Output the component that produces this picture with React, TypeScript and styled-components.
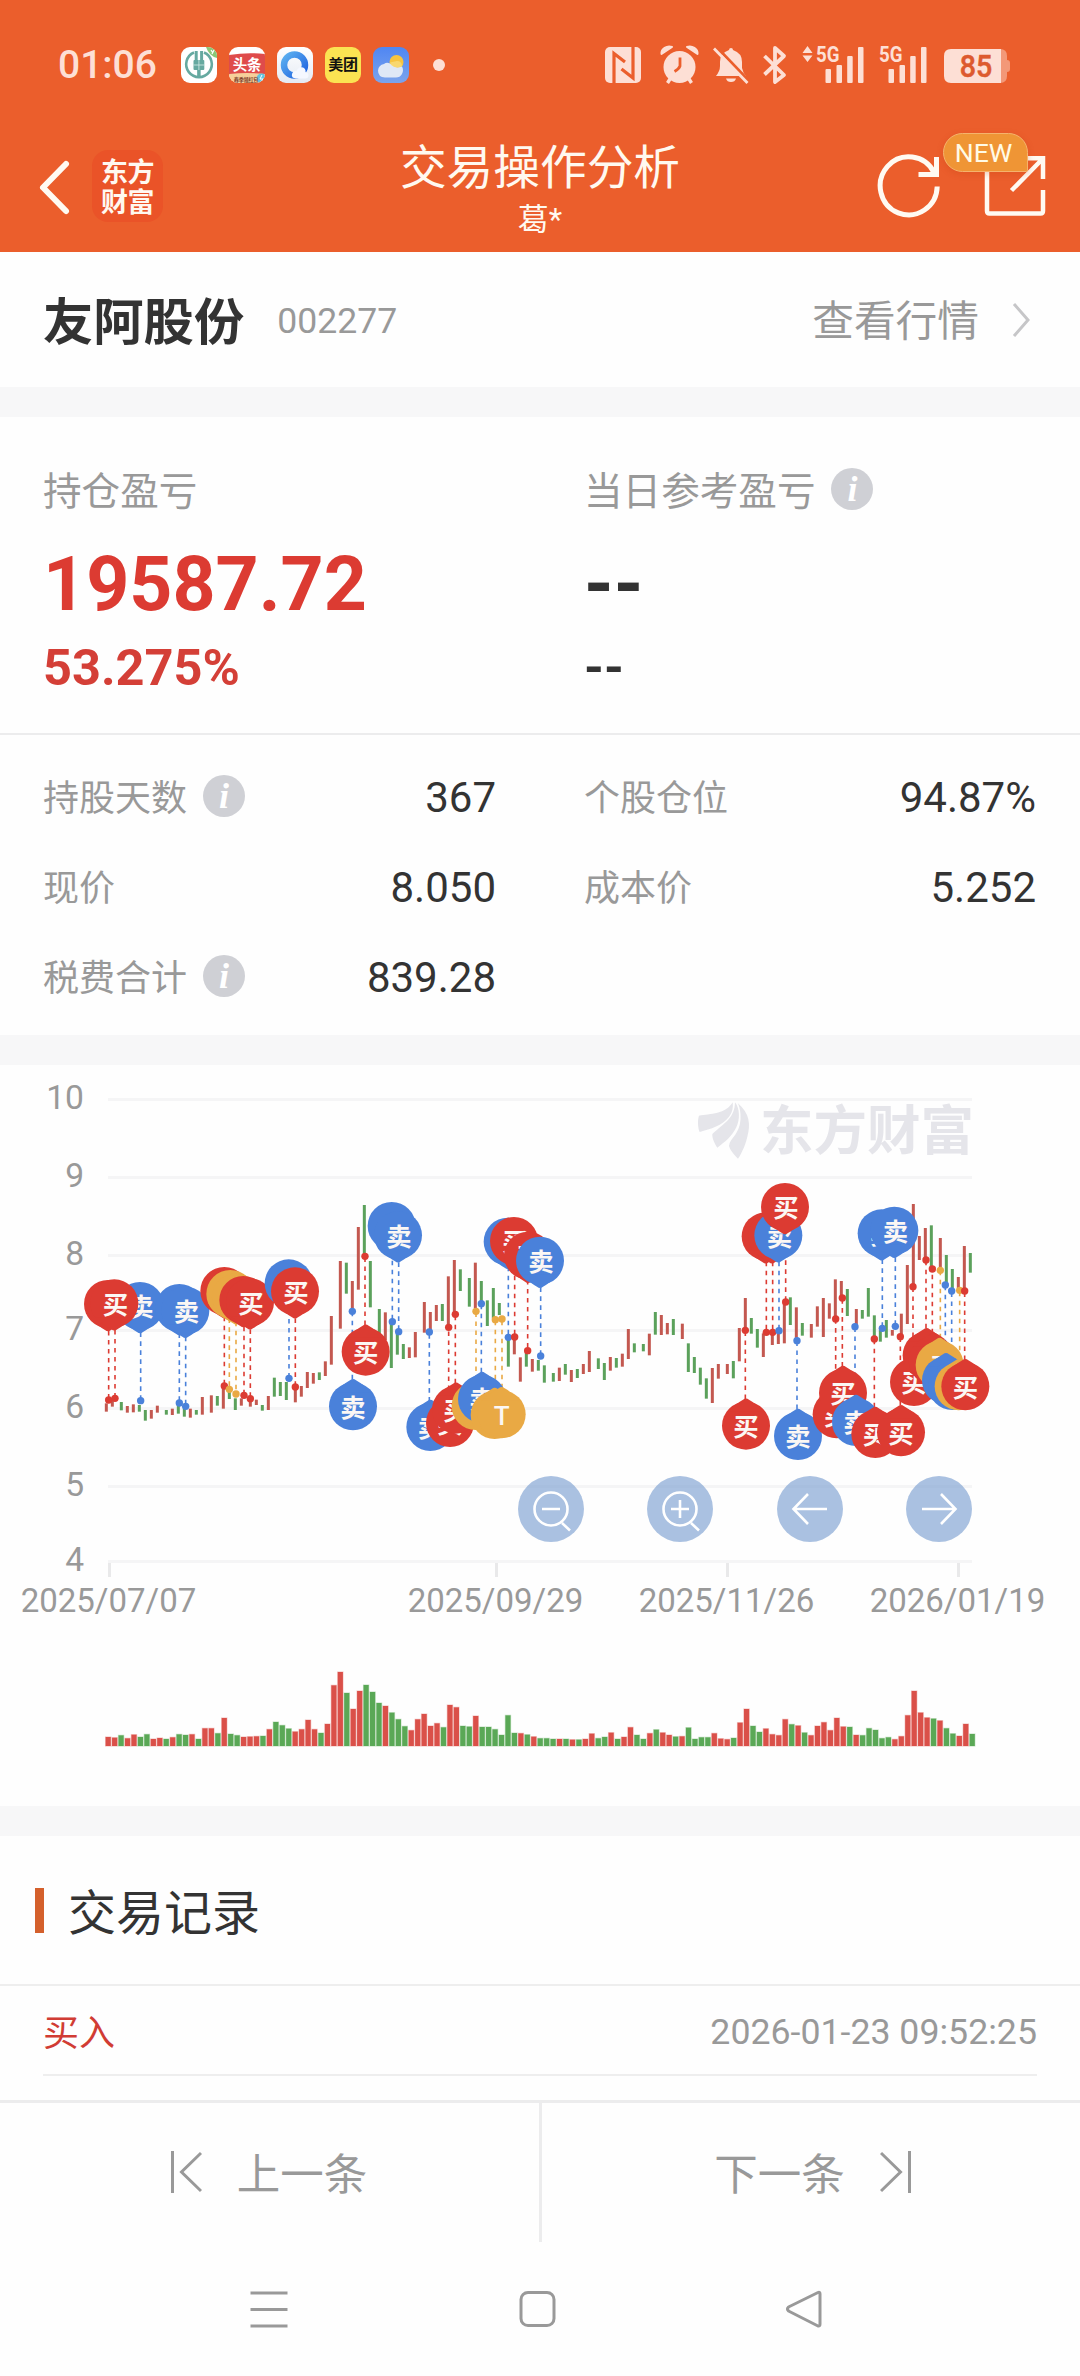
import React from "react";
import styled, { createGlobalStyle } from "styled-components";

const SANS = `Roboto, "Noto Sans CJK SC", sans-serif`;
const RED = "#dc3b32";
const BLUE = "#4a81da";
const AMBER = "#e9a944";
const UP = "#c35850";
const DOWN = "#5ba15b";

const Global = createGlobalStyle`
  body { margin: 0; background: #fdfdfd; }
  * { box-sizing: border-box; }
`;

const Screen = styled.div`
  width: 1080px;
  height: 2376px;
  overflow: hidden;
  display: flex;
  flex-direction: column;
  background: #fefefe;
  font-family: ${SANS};
  color: #333;
`;

const Header = styled.header`
  height: 252px;
  flex: none;
  background: #eb5e2c;
  display: flex;
  flex-direction: column;
`;

const StatusBar = styled.div`
  height: 130px;
  padding: 0 70px 0 58px;
  display: flex;
  justify-content: space-between;
  align-items: center;
  color: #fddfd5;
`;

const Clock = styled.span`
  width: 123px;
  font-size: 39px;
  font-weight: 500;
  line-height: 46px;
`;

const StatusGroup = styled.div`
  display: flex;
  align-items: center;
`;

const AppTile = styled.span<{ $bg: string }>`
  width: 36px;
  height: 36px;
  margin-right: 12px;
  border-radius: 9px;
  overflow: hidden;
  background: ${(p) => p.$bg};
  display: flex;
  align-items: center;
  justify-content: center;
  font-size: 15px;
  line-height: 36px;
  font-weight: 700;
  letter-spacing: -0.3px;
  color: #111;
`;

const Dot = styled.span`
  width: 12px;
  height: 12px;
  margin-left: 12px;
  border-radius: 50%;
  background: #fddfd5;
`;

const NavBar = styled.div`
  flex: 1;
  display: grid;
  grid-template-columns: 300px 1fr 300px;
`;

const NavLeft = styled.div`
  display: flex;
  align-items: flex-start;
  padding: 20px 0 0 36px;
  gap: 18px;
`;

const BrandTile = styled.div`
  width: 71px;
  height: 72px;
  border-radius: 16px;
  background: #ea5328;
  padding: 8px 0 0 0;
  text-align: center;
  font-size: 27px;
  line-height: 30px;
  font-weight: 700;
  letter-spacing: -0.5px;
  color: #fff8f0;
`;

const TitleBlock = styled.div`
  padding-top: 10px;
  text-align: center;
  color: #fff9f0;
  white-space: nowrap;
`;

const Title = styled.h1`
  margin: 0;
  font-size: 46.7px;
  font-weight: 400;
  line-height: 56px;
`;

const Subtitle = styled.div`
  font-size: 31px;
  line-height: 47px;
`;

const NavRight = styled.div`
  display: flex;
  align-items: flex-start;
  padding: 22px 0 0 96px;
  gap: 41px;
`;

const ShareWrap = styled.div`
  position: relative;
  width: 66px;
`;

const NewBadge = styled.span`
  position: absolute;
  left: -40px;
  top: -19px;
  width: 85px;
  height: 39px;
  border: 1.5px solid #f5b36c;
  border-radius: 20px 20px 2px 20px;
  background: #ef9535;
  box-shadow: 0 2px 6px rgba(190, 60, 10, 0.25);
  color: #fffbe6;
  font-size: 26.5px;
  line-height: 37px;
  text-align: center;
  padding-right: 4px;
`;

const StockRow = styled.section`
  height: 135px;
  flex: none;
  padding: 0 43px;
  display: flex;
  align-items: center;
`;

const StockName = styled.span`
  padding-top: 6px;
  font-size: 50.3px;
  font-weight: 700;
  line-height: 60px;
`;

const StockCode = styled.span`
  margin-left: 33px;
  padding-top: 3px;
  font-size: 35.6px;
  line-height: 40px;
  color: #999;
`;

const QuoteLink = styled.a`
  margin-left: auto;
  display: flex;
  align-items: center;
  gap: 32px;
  padding-right: 6px;
  line-height: 50px;
`;

const QuoteText = styled.span`
  padding-top: 4px;
  font-size: 41.7px;
  color: #999;
`;

const Band = styled.div`
  height: 30px;
  flex: none;
  background: #f7f7f8;
`;

const ProfitGrid = styled.section`
  height: 318px;
  flex: none;
  padding: 43px 43px 0;
  display: grid;
  grid-template-columns: 541px 1fr;
  border-bottom: 2px solid #ececed;
`;

const ProfitColumn = styled.div`
  display: flex;
  flex-direction: column;
`;

const Label = styled.span<{ $size?: number }>`
  display: inline-flex;
  align-items: center;
  gap: 16px;
  height: 60px;
  padding-top: 4px;
  font-size: ${(p) => p.$size ?? 36}px;
  line-height: 56px;
  color: #999;
`;

const BigValue = styled.strong<{ $tone: string }>`
  margin-top: 19px;
  font-size: 75.2px;
  line-height: 90px;
  font-weight: 700;
  color: ${(p) => p.$tone};
`;

const SubValue = styled.strong<{ $tone: string }>`
  margin-top: 8px;
  font-size: 50.5px;
  line-height: 62px;
  font-weight: 700;
  color: ${(p) => p.$tone};
`;

const InfoDot = styled.span`
  width: 42px;
  height: 42px;
  margin-bottom: 6px;
  border-radius: 50%;
  background: #cfd0d5;
  color: #fff;
  display: inline-flex;
  align-items: center;
  justify-content: center;
  font: italic 700 36px/42px "Liberation Serif", serif;
`;

const StatGrid = styled.section`
  height: 300px;
  flex: none;
  padding: 17px 44px 0 43px;
  display: grid;
  grid-template-columns: 453px 452px;
  grid-auto-rows: 90px;
  column-gap: 88px;
`;

const StatRow = styled.div`
  display: flex;
  align-items: center;
  justify-content: space-between;
`;

const StatValue = styled.span`
  padding-top: 1px;
  font-size: 42px;
  line-height: 60px;
  color: #333;
`;

const ChartPanel = styled.section`
  position: relative;
  height: 741px;
  flex: none;
`;

const ChartControls = styled.div`
  position: absolute;
  left: 518px;
  top: 411px;
  width: 454px;
  display: flex;
  justify-content: space-between;
`;

const RoundButton = styled.button`
  width: 66px;
  height: 66px;
  padding: 0;
  border: 0;
  border-radius: 50%;
  background: rgba(130, 163, 211, 0.68);
  display: block;
`;

const RecordHead = styled.div`
  height: 150px;
  flex: none;
  display: flex;
  align-items: center;
  gap: 24px;
  padding: 2px 0 0 35px;
  border-bottom: 2px solid #eee;
`;

const RecordTitle = styled.h2`
  margin: 0;
  padding-top: 5px;
  font-size: 48px;
  font-weight: 400;
  line-height: 60px;
`;

const Accent = styled.i`
  width: 9px;
  height: 45px;
  background: #d4602c;
  margin-top: -2px;
`;

const RecordRow = styled.div`
  height: 90px;
  flex: none;
  margin: 0 43px;
  display: flex;
  align-items: center;
  justify-content: space-between;
  border-bottom: 2px solid #eee;
`;

const Side = styled.span`
  font-size: 36px;
  color: #d13c34;
`;

const Time = styled.span`
  padding-top: 4px;
  font-size: 35.7px;
  color: #999;
`;

const Pager = styled.nav`
  margin-top: 24px;
  height: 142px;
  flex: none;
  display: grid;
  grid-template-columns: 542px 538px;
  border-top: 3px solid #ececed;
`;

const PagerItem = styled.div<{ $first?: boolean }>`
  display: flex;
  align-items: center;
  justify-content: center;
  gap: 35px;
  padding: 0 ${(p) => (p.$first ? 2 : 0)}px 2px ${(p) => (p.$first ? 0 : 4)}px;
  border-right: ${(p) => (p.$first ? "3px solid #ececed" : "0")};
`;

const PagerText = styled.span`
  padding-top: 8px;
  font-size: 43.5px;
  line-height: 60px;
  color: #999;
`;

const SystemNav = styled.div`
  flex: 1;
  display: flex;
  justify-content: space-between;
  align-items: center;
  padding: 0 256px 0 249px;
`;

/* ---------- chart data ---------- */

type Kind = "R" | "B" | "O";
// x, top, bottom in thirds of a pixel from the block origin, then direction.
type Candle = [number, number, number, "R" | "G"];
// x, dot y, far end y, kind.
type Trace = [number, number, number, Kind];
// x, centre y, pointing direction, kind, and true when a later pin covers the glyph.
type Pin = [number, number, "up" | "down", Kind, boolean?];

interface Block {
  origin: number;
  candles: Candle[];
  traces: Trace[];
  pins: Pin[];
}

const blocks: Block[] = [
  {
    origin: 60,
    candles: [
      [139, 1000, 1025, "R"], [157, 990, 1010, "R"], [184, 996, 1021, "G"], [202, 1008, 1028, "R"],
      [220, 1003, 1027, "R"], [238, 1005, 1025, "G"], [256, 1020, 1052, "G"], [274, 1020, 1046, "R"],
      [292, 1007, 1028, "R"], [319, 1020, 1034, "G"], [337, 1016, 1035, "R"], [355, 1005, 1031, "G"],
      [373, 1015, 1040, "G"], [391, 1016, 1043, "R"], [409, 1020, 1034, "G"], [427, 981, 1034, "R"],
      [454, 976, 1028, "R"], [472, 978, 1007, "G"], [490, 955, 1016, "R"], [508, 965, 987, "G"],
      [526, 985, 1020, "G"], [544, 985, 1007, "R"], [571, 990, 1010, "R"], [589, 989, 1005, "R"],
      [607, 1005, 1022, "G"], [625, 978, 1020, "R"], [643, 923, 980, "G"], [661, 936, 978, "G"],
      [679, 936, 990, "G"], [706, 955, 997, "R"], [724, 948, 980, "R"], [742, 906, 954, "R"],
      [760, 909, 941, "R"], [778, 907, 930, "G"], [796, 874, 918, "R"], [814, 738, 884, "R"],
      [841, 573, 776, "R"], [859, 578, 671, "G"], [877, 633, 715, "R"], [895, 471, 659, "R"],
      [913, 405, 560, "G"], [931, 573, 712, "G"], [958, 717, 800, "G"], [976, 727, 810, "R"],
      [994, 760, 894, "G"], [1012, 790, 854, "G"], [1030, 822, 867, "G"], [1048, 832, 864, "R"],
      [1066, 786, 862, "R"],
    ],
    traces: [
      [146, 990, 783, "R"], [165, 985, 780, "R"], [242, 992, 787, "B"], [358, 999, 790, "B"],
      [377, 1009, 800, "B"], [493, 948, 740, "R"], [508, 958, 745, "O"], [528, 972, 755, "O"],
      [552, 976, 770, "R"], [571, 986, 778, "R"], [687, 925, 720, "B"], [706, 951, 745, "R"],
      [877, 724, 928, "B"], [915, 559, 765, "R"], [997, 755, 545, "B"], [1016, 785, 577, "B"],
    ],
    pins: [
      [240, 708, "down", "B"], [358, 714, "down", "B", true], [376, 722, "down", "B"],
      [144, 702, "down", "R", true], [163, 700, "down", "R"],
      [493, 663, "down", "R", true], [511, 672, "down", "O", true], [528, 682, "down", "O", true],
      [550, 690, "down", "R", true], [570, 697, "down", "R"],
      [686, 640, "down", "B", true], [705, 664, "down", "R"],
      [879, 1009, "up", "B"], [917, 845, "up", "R"],
      [995, 468, "down", "B", true], [1014, 496, "down", "B"],
    ],
  },
  {
    origin: 400,
    candles: [
      [73, 696, 788, "R"], [91, 726, 790, "R"], [109, 705, 753, "R"], [127, 702, 753, "G"],
      [145, 619, 770, "R"], [163, 570, 733, "R"], [181, 598, 663, "G"], [208, 624, 710, "G"],
      [226, 578, 715, "R"], [244, 633, 700, "G"], [262, 691, 768, "G"], [280, 654, 745, "G"],
      [298, 699, 735, "G"], [325, 805, 890, "G"], [343, 800, 853, "R"], [361, 862, 935, "R"],
      [379, 845, 890, "G"], [397, 867, 905, "R"], [415, 870, 902, "G"], [433, 886, 938, "G"],
      [460, 909, 935, "G"], [478, 893, 933, "R"], [496, 882, 914, "G"], [514, 900, 936, "R"],
      [532, 897, 924, "G"], [550, 882, 912, "R"], [568, 843, 906, "R"], [595, 865, 897, "G"],
      [613, 879, 930, "G"], [631, 861, 902, "R"], [649, 864, 893, "G"], [667, 851, 890, "R"],
      [685, 777, 867, "R"], [703, 820, 847, "G"], [730, 822, 844, "G"], [748, 791, 856, "R"],
      [766, 726, 794, "G"], [784, 735, 795, "R"], [802, 759, 793, "R"], [820, 747, 795, "G"],
      [847, 761, 807, "R"], [865, 820, 906, "G"], [883, 861, 909, "G"], [901, 893, 944, "G"],
      [919, 925, 986, "G"], [937, 894, 999, "R"], [955, 882, 926, "R"], [982, 882, 912, "R"],
      [1000, 873, 925, "G"],
    ],
    traces: [
      [88, 786, 995, "B"], [146, 772, 960, "R"], [166, 733, 940, "R"], [228, 724, 930, "O"],
      [244, 701, 907, "B"], [286, 749, 955, "O"], [306, 747, 955, "O"], [325, 802, 590, "B"],
      [344, 801, 590, "R"], [383, 842, 630, "R"], [422, 858, 652, "B"],
    ],
    pins: [
      [91, 1071, "up", "B"], [150, 1059, "up", "R"], [168, 1019, "up", "R"], [227, 1008, "up", "O", true],
      [246, 987, "up", "B"], [284, 1035, "up", "O", true], [305, 1033, "up", "O"],
      [323, 515, "down", "B", true], [342, 513, "down", "R"], [384, 557, "down", "R"], [420, 572, "down", "B"],
    ],
  },
  {
    origin: 690,
    candles: [
      [148, 774, 874, "R"], [166, 684, 785, "R"], [184, 744, 791, "G"], [202, 777, 833, "G"],
      [220, 790, 861, "R"], [247, 785, 825, "R"], [265, 785, 822, "R"], [283, 695, 820, "R"],
      [301, 682, 765, "G"], [319, 712, 812, "R"], [337, 759, 797, "G"], [364, 762, 803, "R"],
      [382, 709, 770, "R"], [400, 684, 801, "R"], [418, 700, 746, "R"], [436, 628, 748, "R"],
      [454, 633, 685, "R"], [472, 657, 738, "G"], [499, 717, 765, "R"], [517, 720, 746, "G"],
      [535, 654, 740, "G"], [553, 736, 807, "G"], [571, 780, 815, "G"], [589, 750, 803, "G"],
      [607, 780, 797, "R"], [634, 731, 800, "R"], [652, 585, 762, "R"], [670, 402, 650, "R"],
      [688, 498, 570, "R"], [706, 474, 570, "R"], [724, 466, 597, "G"], [751, 504, 600, "R"],
      [769, 555, 640, "G"], [787, 597, 663, "G"], [805, 621, 655, "R"], [823, 528, 660, "R"],
      [841, 549, 608, "G"],
    ],
    traces: [
      [166, 781, 987, "R"], [229, 787, 575, "R"], [248, 787, 575, "R"], [267, 782, 575, "B"],
      [287, 696, 490, "R"], [321, 812, 1017, "B"], [437, 747, 950, "R"], [457, 684, 890, "R"],
      [495, 770, 975, "B"], [553, 807, 1012, "R"], [577, 775, 568, "B"], [616, 769, 562, "B"],
      [631, 800, 1005, "R"], [669, 650, 855, "R"], [708, 570, 775, "R"], [727, 597, 790, "R"],
      [751, 601, 805, "O"], [766, 645, 850, "B"], [785, 663, 870, "B"], [809, 661, 868, "O"],
      [824, 663, 870, "R"],
    ],
    pins: [
      [227, 499, "down", "R", true], [246, 499, "down", "R", true], [265, 496, "down", "B"], [285, 411, "down", "R"],
      [168, 1067, "up", "R"], [324, 1098, "up", "B"], [440, 1033, "up", "R"], [459, 969, "up", "R"],
      [498, 1056, "up", "B"], [556, 1092, "up", "R"], [633, 1087, "up", "R"],
      [575, 490, "down", "B"], [613, 482, "down", "B"],
      [672, 936, "up", "R"], [710, 856, "up", "R"], [728, 872, "up", "R", true], [749, 885, "up", "O"],
      [768, 931, "up", "B", true], [787, 948, "up", "B", true], [806, 949, "up", "O", true], [826, 949, "up", "R"],
    ],
  },
];

const volumes: number[] = [
  27, 25, 32, 23, 34, 27, 35, 21, 24, 21, 26, 35, 33, 35, 21, 53, 53, 38, 84, 36, 32, 27, 28, 29, 30, 50, 72, 62, 52,
  43, 50, 78, 50, 39, 66, 182, 222, 159, 111, 165, 183, 162, 129, 120, 100, 80, 59, 47, 80, 96, 60, 68, 56, 123, 116,
  60, 58, 90, 57, 57, 50, 33, 92, 39, 38, 34, 28, 23, 23, 21, 21, 21, 19, 19, 21, 37, 23, 27, 40, 21, 27, 56, 33, 21,
  38, 49, 40, 33, 28, 29, 55, 21, 26, 26, 38, 22, 20, 24, 70, 111, 60, 42, 52, 35, 32, 80, 65, 61, 40, 32, 60, 71,
  47, 84, 58, 57, 33, 32, 53, 48, 23, 26, 20, 29, 92, 165, 100, 85, 82, 76, 53, 37, 30, 66, 36,
];

// Indexes of the sessions drawn green; every other session is red.
const greenDays = new Set([
  2, 5, 6, 9, 11, 12, 14, 17, 19, 20, 24, 26, 27, 28, 33, 37, 40, 41, 42, 44, 45, 46, 52, 55, 56, 58, 59, 60, 61, 62, 63,
  65, 67, 68, 69, 71, 73, 76, 77, 79, 82, 83, 85, 88, 90, 91, 92, 93, 97, 100, 101, 106, 108, 115, 117, 118, 119, 120,
  121, 128, 130, 131, 134,
]);

const gridLines: [number, string][] = [
  [34.5, "10"], [112.5, "9"], [190.5, "8"], [265.5, "7"], [343.5, "6"], [421.5, "5"], [496.5, "4"],
];
const dates: [number, string][] = [
  [109, "2025/07/07"], [496, "2025/09/29"], [727, "2025/11/26"], [958, "2026/01/19"],
];

const tone = { R: RED, B: BLUE, O: AMBER };
const glyph = { R: "买", B: "卖", O: "T" };
const third = (v: number) => v / 3;
const chartY = (v: number) => 5 + v / 3;

interface PinProps {
  x: number;
  y: number;
  dir: "up" | "down";
  kind: Kind;
  covered?: boolean;
}

function PinMark({ x, y, dir, kind, covered }: PinProps) {
  const s = dir === "up" ? -1 : 1;
  return (
    <g transform={`translate(${x} ${y})`}>
      <circle r="24" fill={tone[kind]} />
      <path
        d={`M-19 ${14 * s} Q-10 ${22 * s} -3 ${26 * s} Q0 ${28.5 * s} 3 ${26 * s} Q10 ${22 * s} 19 ${14 * s}Z`}
        fill={tone[kind]}
      />
      {!covered && (
        <text x={dir === "down" ? 1 : 0} y="10.4" fontSize={kind === "O" ? 26 : 25.4} fontWeight={kind === "O" ? 500 : 700} textAnchor="middle" fill="#fbf7f4">
          {glyph[kind]}
        </text>
      )}
    </g>
  );
}

function PriceChart() {
  return (
    <svg width="1080" height="741" viewBox="0 0 1080 741" fontFamily={SANS} display="block">
      {gridLines.map(([y, t]) => (
        <g key={t}>
          <rect x="108" y={y - 1.5} width="864" height="3" fill="#f5f5f6" />
          <text x="84" y={y + 9.5} fontSize="33.6" fill="#999" textAnchor="end">{t}</text>
        </g>
      ))}
      <g fill="#e5e5ea">
        <g transform="translate(690 5) scale(.3333)">
          <path d="M128 97C108 132 60 132 27 137C22 150 24 175 29 186C62 178 98 166 116 142C127 127 130 115 128 97Z" />
          <path d="M135 97C134 142 108 156 67 192C66 205 74 222 82 233C105 215 124 202 139 172C150 150 150 115 135 97Z" />
          <path d="M143 99C180 130 182 165 172 200C165 230 152 255 144 266C130 252 120 240 117 228C120 205 140 200 149 165C154 145 152 115 143 99Z" />
        </g>
        <text x="760" y="84.500" fontSize="53.500" fontWeight="700">东方财富</text>
      </g>
      {dates.map(([x, t]) => (
        <g key={t}>
          <rect x={x - 1} y="498" width="3" height="14" fill="#e9e9ea" />
          <text x={x - 0.5} y="547" fontSize="33" fill="#999" textAnchor="middle">{t}</text>
        </g>
      ))}
      {blocks.map((b) =>
        b.candles.map(([x, t, e, c]) => (
          <rect key={`${b.origin}-${x}`} x={b.origin + third(x) - 1.5} y={chartY(t)} width="3" height={third(e - t)} fill={c === "R" ? UP : DOWN} />
        ))
      )}
      {blocks.map((b) =>
        b.traces.map(([x, y, e, c]) => (
          <g key={`${b.origin}-${x}`}>
            <line x1={b.origin + third(x)} x2={b.origin + third(x)} y1={chartY(e)} y2={chartY(y)} stroke={tone[c]} strokeWidth="1.6" strokeDasharray="4.6 4.4" />
            <circle cx={b.origin + third(x)} cy={chartY(y)} r="3.7" fill={tone[c]} />
          </g>
        ))
      )}
      {blocks.map((b) =>
        b.pins.map(([x, y, d, c, covered]) => (
          <PinMark key={`${b.origin}-${x}-${y}`} x={b.origin + third(x)} y={chartY(y)} dir={d} kind={c} covered={covered} />
        ))
      )}
      {volumes.map((v, i) => {
        const h = v / 3;
        const fill = greenDays.has(i) ? "#5aa856" : "#da5049";
        return (
          <rect key={i} x={105.6 + i * 6.448} y={681 - h} width="5.2" height={h} fill={fill} stroke={fill} strokeOpacity="0.3" strokeWidth="1.2" paintOrder="stroke" />
        );
      })}
    </svg>
  );
}

/* ---------- icons ---------- */

function DeviceStatus() {
  return (
    <svg width="406" height="44" viewBox="604 43 406 44" fill="#fddfd5" fontFamily={SANS}>
      <rect x="605" y="47" width="36" height="36" rx="5" />
      <path d="M614 83V53.5L625 62M633 47V78L621.5 69" fill="none" stroke="#eb5e2c" strokeWidth="3.2" />
      <circle cx="679.5" cy="67" r="16" />
      <path d="M661.5 54C661 49 667 45 672 47ZM697.5 54C698 49 692 45 687 47Z" stroke="#fddfd5" strokeWidth="2" strokeLinejoin="round" />
      <path d="M670 79L667.500 83M689 79L691.500 83" stroke="#fddfd5" strokeWidth="3.4" />
      <path d="M680 57.500V66Q679 69 674.500 71.500" fill="none" stroke="#eb5e2c" strokeWidth="2.8" />
      <path d="M729 50Q729 48 731 48T733 50Q742 53 742 62V68Q743 73 746 76H716Q720 71 720 66V62Q720 53 729 50ZM726 78.500H736Q735 82 731 82T726 78.500Z" />
      <path d="M717 47.500L750 82" stroke="#eb5e2c" strokeWidth="3" />
      <path d="M714 48.500L747.500 83" stroke="#fddfd5" strokeWidth="2.8" />
      <path d="M764.500 56L784 75L775 82V48L784 56L764.500 74.500" fill="none" stroke="#fddfd5" strokeWidth="3.8" strokeLinejoin="round" />
      <path d="M802.500 53L807.500 46L812.500 53ZM802.500 55.500L807.500 62L812.500 55.500Z" />
      <text x="816" y="62" fontSize="22" fontWeight="700" textLength="23.500" lengthAdjust="spacingAndGlyphs">5G</text>
      {[0, 63].map((dx) => (
        <g key={dx} transform={`translate(${dx} 0)`}>
          <rect x="825.5" y="69" width="5.500" height="14" rx="1" />
          <rect x="836.500" y="65" width="5.500" height="18" rx="1" />
          <rect x="847.200" y="56" width="5.500" height="27" rx="1" />
          <rect x="858" y="47" width="5.500" height="36" rx="1" />
        </g>
      ))}
      <text x="879" y="62" fontSize="22" fontWeight="700" textLength="23.500" lengthAdjust="spacingAndGlyphs">5G</text>
      <path d="M1000 49Q1007 49 1007 56V60Q1010 60 1010 63V69Q1010 72 1007 72V76Q1007 83 1000 83Z" opacity=".45" />
      <path d="M951 49H1001V83H951Q944 83 944 76V56Q944 49 951 49Z" />
      <text x="976" y="77" fontSize="30.500" fontWeight="500" fill="#dd5a2e" stroke="#dd5a2e" strokeWidth=".5" textAnchor="middle" textLength="32.500" lengthAdjust="spacingAndGlyphs">85</text>
    </svg>
  );
}

function BankIcon() {
  return (
    <svg width="36" height="36" viewBox="0 0 36 36">
      <path d="M25 0H36V11Q28 9 25 0Z" fill="#8bc777" />
      <path d="M30 3l2 3m1-3l-2 4" stroke="#fff" strokeWidth="1.2" />
      <path d="M13 5.500A12.800 12.800 0 1 0 23 5.500" fill="none" stroke="#66a9a0" strokeWidth="2.6" />
      <path d="M15.200 4V14M20.600 4V14" stroke="#66a9a0" strokeWidth="3" />
      <rect x="12.500" y="13" width="10.800" height="10" rx="1" fill="#66a9a0" />
      <path d="M17.900 13V31" stroke="#66a9a0" strokeWidth="3.500" />
      <path d="M12.500 18H23M17.900 13V23" stroke="#d6ece8" strokeWidth=".8" />
    </svg>
  );
}

function NewsIcon() {
  return (
    <svg width="36" height="36" viewBox="0 0 36 36" fontFamily={SANS}>
      <path d="M0 8Q18 5 36 7V28H0Z" fill="#df4b4b" />
      <path d="M0 27Q18 25 36 27V36H0Z" fill="#f6cf9a" />
      <circle cx="32.500" cy="31.500" r="5" fill="#62c3df" />
      <path d="M33 28l-2 4h3l-2 3" stroke="#fff" fill="none" />
      <text x="18" y="23" fontSize="14.500" fontWeight="700" textAnchor="middle" fill="#fff">头条</text>
      <text x="17" y="34.500" fontSize="5.200" fontWeight="700" textAnchor="middle" fill="#80402a">春季领红包</text>
    </svg>
  );
}

function BrowserIcon() {
  return (
    <svg width="36" height="36" viewBox="0 0 36 36">
      <defs>
        <linearGradient id="ring" x1="0" y1="0" x2="1" y2="1">
          <stop offset="0" stopColor="#5cb0f0" />
          <stop offset="1" stopColor="#1f63e0" />
        </linearGradient>
      </defs>
      <circle cx="17.500" cy="18" r="10.500" fill="none" stroke="url(#ring)" strokeWidth="6.500" />
      <path d="M19 31.500Q14 31 15 27Q16 23.500 19.500 24Q21.500 19 26 20.500Q29 22 28.500 25Q32 26 31.500 29Q31 31.500 28 31.500Z" fill="#f5f8ff" />
    </svg>
  );
}

function WeatherIcon() {
  return (
    <svg width="36" height="36" viewBox="0 0 36 36">
      <circle cx="23.500" cy="15" r="7" fill="#f7c440" />
      <path d="M12 30.500Q5 30 5 23.500Q5.500 18 11 17Q14.500 14 19 18Q22 22 29 19.500Q31 23 29 27Q27 30.500 23 30.500Z" fill="#dfe8f6" />
      <path d="M17 15.500Q19 22 29 19.500Q29 14 24 14Z" fill="#f7dc7a" opacity=".8" />
    </svg>
  );
}

const stroke = { fill: "none", stroke: "#fffaf2", strokeWidth: 5 } as const;

export default function App() {
  return (
    <Screen>
      <Global />
      <Header>
        <StatusBar>
          <StatusGroup>
            <Clock>01:06</Clock>
            <AppTile $bg="#fff"><BankIcon /></AppTile>
            <AppTile $bg="#fff"><NewsIcon /></AppTile>
            <AppTile $bg="linear-gradient(#fff, #e4eaf3)"><BrowserIcon /></AppTile>
            <AppTile $bg="#fbe352">美团</AppTile>
            <AppTile $bg="linear-gradient(#4f86f3, #7ba4ec)"><WeatherIcon /></AppTile>
            <Dot />
          </StatusGroup>
          <DeviceStatus />
        </StatusBar>
        <NavBar>
          <NavLeft>
            <svg width="38" height="72" viewBox="36 150 38 72">
              <path d="M66 164L43 187.500L66 211" {...stroke} strokeWidth={6} strokeLinecap="round" strokeLinejoin="round" />
            </svg>
            <BrandTile>东方<br />财富</BrandTile>
          </NavLeft>
          <TitleBlock>
            <Title>交易操作分析</Title>
            <Subtitle>葛*</Subtitle>
          </TitleBlock>
          <NavRight>
            <svg width="66" height="68" viewBox="876 152 66 68">
              <path d="M937.200 186.500A28.500 29 0 1 1 934 172.500" {...stroke} />
              <path d="M918.500 174.500H936.500V157" {...stroke} />
            </svg>
            <ShareWrap>
              <svg width="66" height="68" viewBox="983 152 66 68">
                <path d="M987 165V211Q987 213.500 989.500 213.500H1040.500Q1043 213.500 1043 211V190" {...stroke} strokeWidth={4.500} />
                <path d="M1026 158.200H1043V179M1042 159.500L1011.500 190.500" {...stroke} strokeWidth={4.500} />
              </svg>
              <NewBadge>NEW</NewBadge>
            </ShareWrap>
          </NavRight>
        </NavBar>
      </Header>

      <StockRow>
        <StockName>友阿股份</StockName>
        <StockCode>002277</StockCode>
        <QuoteLink>
          <QuoteText>查看行情</QuoteText>
          <svg width="20" height="36" viewBox="0 0 20 36">
            <path d="M3 2L17 18L3 34" fill="none" stroke="#c6c6c8" strokeWidth="3" />
          </svg>
        </QuoteLink>
      </StockRow>
      <Band />

      <ProfitGrid>
        <ProfitColumn>
          <Label $size={38.6}>持仓盈亏</Label>
          <BigValue $tone={RED}>19587.72</BigValue>
          <SubValue $tone="#d43f37">53.275%</SubValue>
        </ProfitColumn>
        <ProfitColumn>
          <Label $size={38.6}>当日参考盈亏<InfoDot>i</InfoDot></Label>
          <BigValue $tone="#333">--</BigValue>
          <SubValue $tone="#333">--</SubValue>
        </ProfitColumn>
      </ProfitGrid>

      <StatGrid>
        <StatRow><Label>持股天数<InfoDot>i</InfoDot></Label><StatValue>367</StatValue></StatRow>
        <StatRow><Label>个股仓位</Label><StatValue>94.87%</StatValue></StatRow>
        <StatRow><Label>现价</Label><StatValue>8.050</StatValue></StatRow>
        <StatRow><Label>成本价</Label><StatValue>5.252</StatValue></StatRow>
        <StatRow><Label>税费合计<InfoDot>i</InfoDot></Label><StatValue>839.28</StatValue></StatRow>
      </StatGrid>
      <Band />

      <ChartPanel>
        <PriceChart />
        <ChartControls>
          {["out", "in", "left", "right"].map((k) => (
            <RoundButton key={k} aria-label={k}>
              <svg width="66" height="66" viewBox="0 0 66 66" fill="none" stroke="#fff" strokeWidth="2.6">
                {(k === "out" || k === "in") && (
                  <path d="M33 16.500A16.500 16.500 0 1 0 33 49.500A16.500 16.500 0 1 0 33 16.500M44 47L52 54.500M24 33H42" />
                )}
                {k === "in" && <path d="M33 24V42" />}
                {k === "left" && <path d="M50 33H17M31 18L16.500 33L31 48" />}
                {k === "right" && <path d="M16 33H49M35 18L49.500 33L35 48" />}
              </svg>
            </RoundButton>
          ))}
        </ChartControls>
      </ChartPanel>
      <Band />

      <RecordHead>
        <Accent />
        <RecordTitle>交易记录</RecordTitle>
      </RecordHead>
      <RecordRow>
        <Side>买入</Side>
        <Time>2026-01-23 09:52:25</Time>
      </RecordRow>

      <Pager>
        <PagerItem $first>
          <svg width="32" height="44" viewBox="0 0 32 44" fill="none" stroke="#999" strokeWidth="3">
            <path d="M2.500 1V43M31 3L11.500 22L31 41" />
          </svg>
          <PagerText>上一条</PagerText>
        </PagerItem>
        <PagerItem>
          <PagerText>下一条</PagerText>
          <svg width="32" height="44" viewBox="0 0 32 44" fill="none" stroke="#999" strokeWidth="3">
            <path d="M29.500 1V43M1 3L20.500 22L1 41" />
          </svg>
        </PagerItem>
      </Pager>

      <SystemNav>
        <svg width="40" height="40" viewBox="0 0 40 40" stroke="#999" strokeWidth="3">
          <path d="M1.500 4H38.500M1.500 20.500H38.500M1.500 37H38.500" />
        </svg>
        <svg width="40" height="40" viewBox="0 0 40 40" fill="none" stroke="#999" strokeWidth="3">
          <rect x="4" y="3.500" width="33" height="33" rx="7" />
        </svg>
        <svg width="40" height="40" viewBox="0 0 40 40" fill="none" stroke="#999" strokeWidth="3" strokeLinejoin="round">
          <path d="M4.500 18Q2.500 20 4.500 22L34 37Q36 37.500 36 35V5Q36 2.500 34 3.500Z" />
        </svg>
      </SystemNav>
    </Screen>
  );
}
